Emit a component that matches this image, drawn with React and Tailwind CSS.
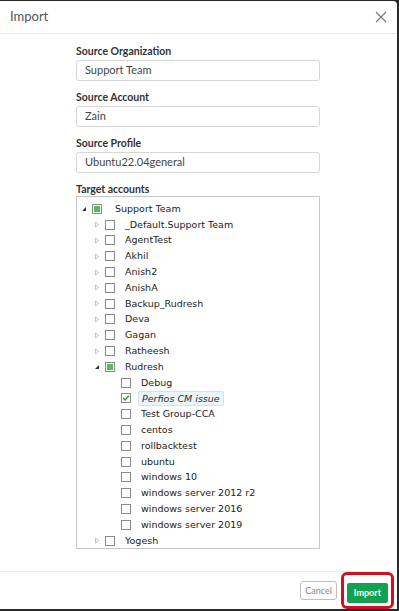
const tree = [
  { label: "Support Team", level: 0, arrow: "open", state: "partial" },
  { label: "_Default.Support Team", level: 1, arrow: "closed" },
  { label: "AgentTest", level: 1, arrow: "closed" },
  { label: "Akhil", level: 1, arrow: "closed" },
  { label: "Anish2", level: 1, arrow: "closed" },
  { label: "AnishA", level: 1, arrow: "closed" },
  { label: "Backup_Rudresh", level: 1, arrow: "closed" },
  { label: "Deva", level: 1, arrow: "closed" },
  { label: "Gagan", level: 1, arrow: "closed" },
  { label: "Ratheesh", level: 1, arrow: "closed" },
  { label: "Rudresh", level: 1, arrow: "open", state: "partial" },
  { label: "Debug", level: 2 },
  { label: "Perfios CM issue", level: 2, state: "checked", selected: true },
  { label: "Test Group-CCA", level: 2 },
  { label: "centos", level: 2 },
  { label: "rollbacktest", level: 2 },
  { label: "ubuntu", level: 2 },
  { label: "windows 10", level: 2 },
  { label: "windows server 2012 r2", level: 2 },
  { label: "windows server 2016", level: 2 },
  { label: "windows server 2019", level: 2 },
  { label: "Yogesh", level: 1, arrow: "closed" },
];

const indent = ["pl-[4px]", "pl-[17px]", "pl-[44px]"];
const gap = ["ml-[13px]", "ml-[10px]", "ml-[10px]"];

const Arrow = ({ kind }) => {
  if (kind === "open")
    return (
      <svg width="6" height="6" viewBox="0 0 6 6" className="mr-[5px]">
        <path d="M5 1 L5 5 L1 5 Z" fill="#333" />
      </svg>
    );
  return (
    <svg width="6" height="7" viewBox="0 0 6 7" className="mr-[5px]">
      <path d="M1.5 1 L4.5 3.5 L1.5 6 Z" fill="none" stroke="#bbb" strokeWidth="0.9" />
    </svg>
  );
};

const Check = ({ state }) => (
  <span className="flex h-[10px] w-[10px] items-center justify-center border border-[#8a8a8a] bg-white">
    {state === "partial" ? <span className="h-[6px] w-[6px] bg-[#5cb85c]" /> : null}
    {state === "checked" ? (
      <svg width="8" height="8" viewBox="0 0 8 8">
        <path d="M1.2 4 L3.2 6 L6.8 1.8" fill="none" stroke="#2e9a3e" strokeWidth="1.4" />
      </svg>
    ) : null}
  </span>
);

const Field = ({ label, value }) => (
  <div className="flex flex-col">
    <span className="text-[10.5px] font-bold leading-[14px] text-[#333]">{label}</span>
    <div className="mt-[2px] flex h-[21px] items-center rounded-[3px] border border-[#d6d6d6] px-[8px] text-[11px] text-[#444]">
      {value}
    </div>
  </div>
);

export default function App() {
  return (
    <div className="h-[611px] w-[399px] bg-[#2a2a2a] pt-px pr-[2px] pb-[2px]">
      <div className="flex h-full flex-col rounded-tr-[4px] bg-white font-['Lato','Liberation_Sans',sans-serif]">
        <div className="flex h-[33px] items-center justify-between border-b border-[#e6e6e6] pl-[10px] pr-[10px]">
          <span className="text-[13px] text-[#555]">Import</span>
          <svg width="12" height="12" viewBox="0 0 12 12">
            <path d="M1 1 L11 11 M11 1 L1 11" stroke="#777" strokeWidth="1.1" />
          </svg>
        </div>
        <div className="flex flex-1 flex-col gap-[9px] pl-[76px] pr-[77px] pt-[10px]">
          <Field label="Source Organization" value="Support Team" />
          <Field label="Source Account" value="Zain" />
          <Field label="Source Profile" value="Ubuntu22.04general" />
          <div className="flex flex-col">
            <span className="text-[10.5px] font-bold leading-[14px] text-[#333]">Target accounts</span>
            <div className="h-[353px] border border-[#c8c8c8] pt-[4px] font-['DejaVu_Sans',sans-serif] text-[9.5px] text-[#222]">
              {tree.map((n) => (
                <div key={n.label} className={`flex h-[15.8px] items-center ${indent[n.level]}`}>
                  {n.level === 2 ? null : <Arrow kind={n.arrow} />}
                  <Check state={n.state} />
                  {n.selected ? (
                    <span className="ml-[7px] rounded-[2px] border border-[#cfe3f3] bg-[#eaf4fb] px-[3px] leading-[13px] italic text-[#333]">
                      {n.label}
                    </span>
                  ) : (
                    <span className={gap[n.level]}>{n.label}</span>
                  )}
                </div>
              ))}
            </div>
          </div>
        </div>
        <div className="flex h-[38px] items-center justify-end gap-[4px] border-t border-[#ececec] pr-[3px]">
          <button className="h-[19px] rounded-[3px] border border-[#bdbdbd] bg-white px-[4px] text-[9px] text-[#888]">
            Cancel
          </button>
          <div className="rounded-[6px] border-[3px] border-[#d0101f] p-[3px]">
            <button className="h-[20px] rounded-[2px] bg-[#12a150] px-[7px] text-[9px] font-bold text-white">
              Import
            </button>
          </div>
        </div>
      </div>
    </div>
  );
}
